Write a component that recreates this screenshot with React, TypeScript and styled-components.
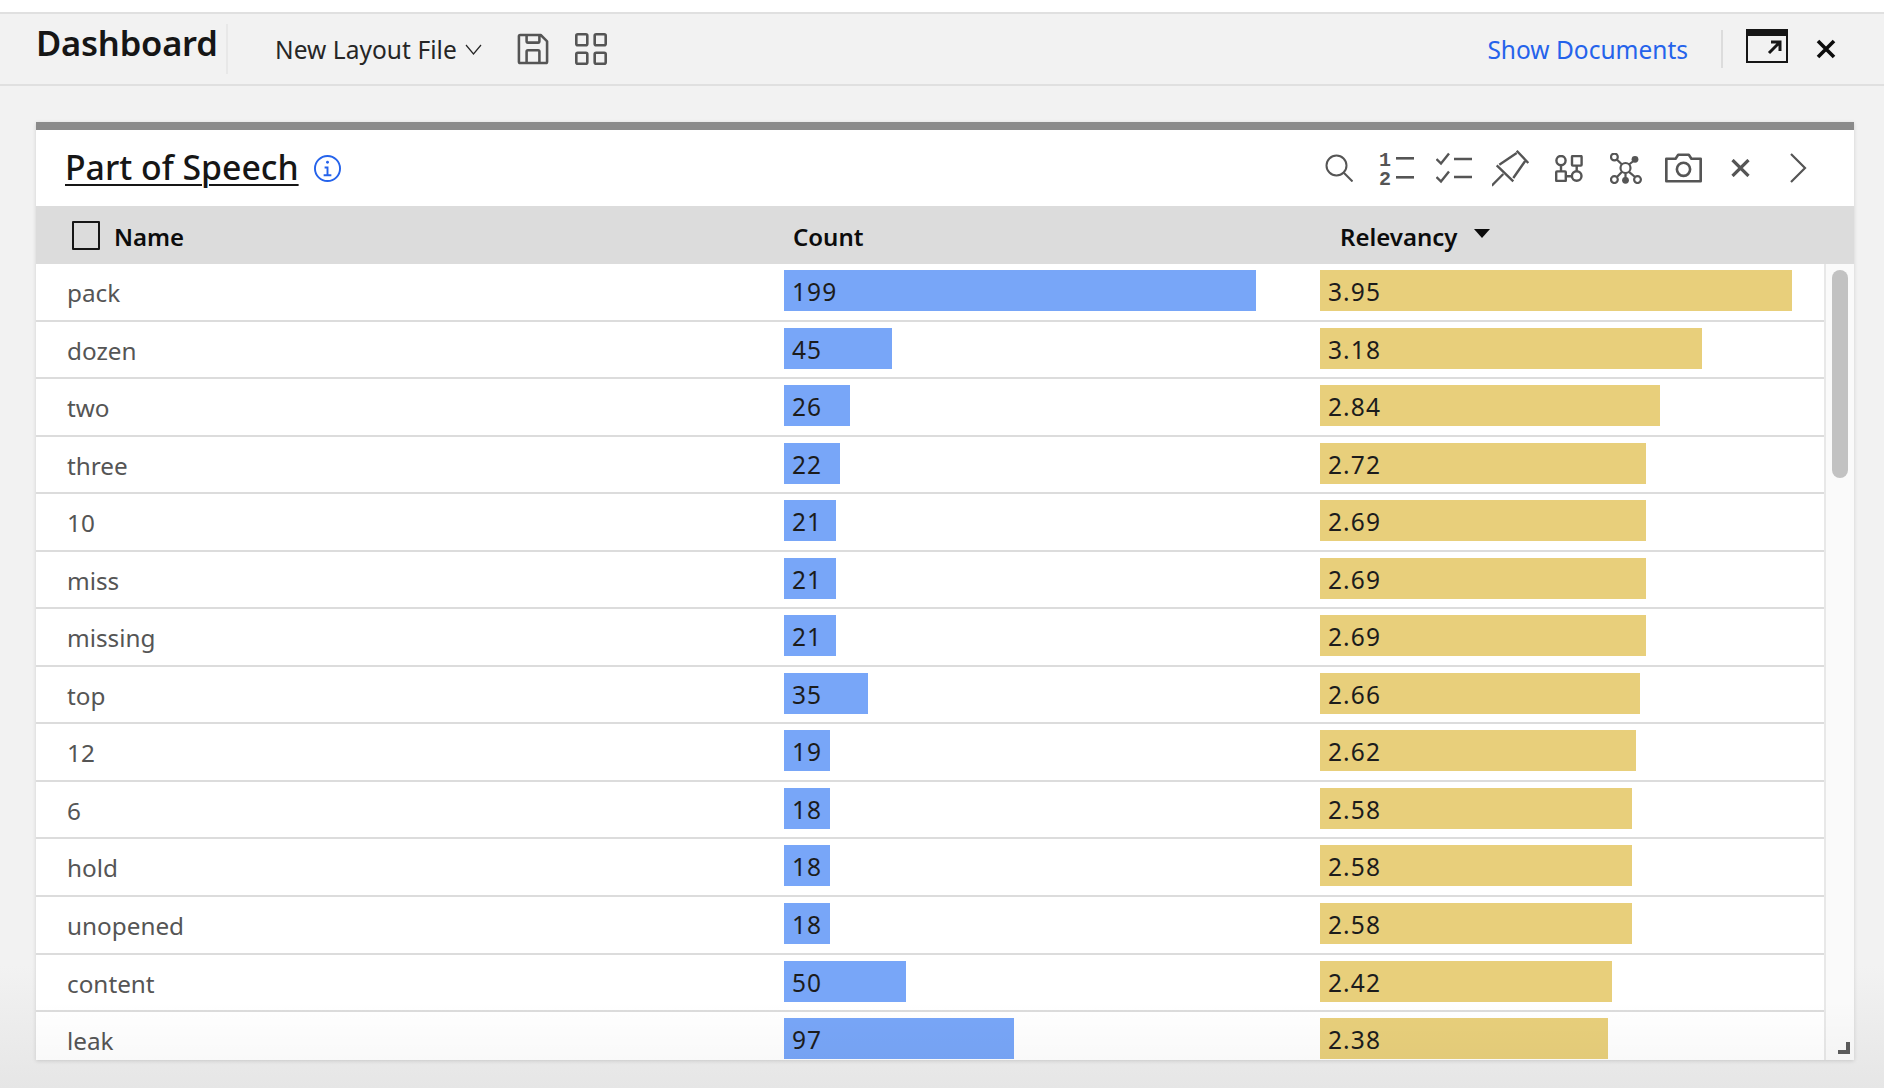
import styled, { createGlobalStyle } from "styled-components";

const GlobalStyle = createGlobalStyle`
  html, body {
    margin: 0;
    background: #fff;
    font-family: "Noto Sans", "Liberation Sans", sans-serif;
  }
`;

/* --- Styles --- */
const Page = styled.div`
  width: 1884px;
  height: 1088px;
  overflow: hidden;
  display: flex;
  flex-direction: column;
  padding-top: 12px;
  box-sizing: border-box;
`;
const TopBar = styled.header`
  height: 74px;
  flex: none;
  box-sizing: border-box;
  display: flex;
  align-items: center;
  background: #f2f2f2;
  border-top: 2px solid #e0e0e0;
  border-bottom: 2px solid #e0e0e0;
`;
const AppTitle = styled.h1`
  margin: 0 0 0 36px;
  width: 190px;
  height: 50px;
  line-height: 38px;
  font-size: 34.5px;
  font-weight: 600;
  letter-spacing: -0.2px;
  color: #161616;
  border-right: 2px solid #e8e8e8;
  white-space: nowrap;
`;
const LayoutPicker = styled.div`
  margin-left: 47px;
  display: flex;
  align-items: center;
  font-size: 24.5px;
  letter-spacing: 0.05px;
  color: #262626;
  white-space: nowrap;
`;
const Chevron = styled.svg`
  margin-left: 8px;
  width: 17px;
  height: 11px;
`;
const HeaderIcons = styled.div`
  margin-left: 35px;
  display: flex;
  gap: 26px;
  align-items: center;
`;
const Spacer = styled.div`
  flex: 1;
`;
const DocsLink = styled.a`
  font-size: 24.5px;
  color: #2563eb;
  white-space: nowrap;
`;
const Divider = styled.div`
  width: 2px;
  height: 38px;
  margin: 0 23px 0 33px;
  background: #dcdcdc;
`;
const PopoutWrap = styled.div`
  display: flex;
  margin-bottom: 6px;
`;
const CloseApp = styled.svg`
  width: 20px;
  height: 20px;
  margin: 0 48px 0 28px;
`;
const Main = styled.main`
  flex: 1;
  min-height: 0;
  padding: 36px 30px 0 36px;
  background: linear-gradient(#f2f2f2 0, #f2f2f2 880px, #e6e6e6 100%);
`;
const Card = styled.section`
  position: relative;
  height: 938px;
  box-sizing: border-box;
  border-top: 8px solid #8a8a8a;
  background: #fff;
  box-shadow: 0 1px 4px rgba(0, 0, 0, 0.14);
  overflow: hidden;
  display: flex;
  flex-direction: column;
`;
const CardHeader = styled.div`
  height: 76px;
  flex: none;
  display: flex;
  align-items: center;
  padding: 0 27px 0 29px;
`;
const CardTitle = styled.h2`
  margin: 0 0 3px;
  font-size: 33.8px;
  font-weight: 500;
  color: #161616;
  text-decoration: underline;
  text-decoration-thickness: 2px;
  text-underline-offset: 4px;
  white-space: nowrap;
`;
const InfoIcon = styled.svg`
  margin-left: 15px;
  width: 27px;
  height: 27px;
`;
const Tools = styled.div`
  margin-left: auto;
  display: flex;
`;
const Tool = styled.div`
  width: 57.4px;
  height: 40px;
  display: flex;
  align-items: center;
  justify-content: center;
`;
const TableHead = styled.div`
  height: 58px;
  flex: none;
  display: grid;
  grid-template-columns: 748px 536px 1fr;
  align-items: center;
  background: #dcdcdc;
`;
const HeadCell = styled.div<{ $inset: number }>`
  display: flex;
  align-items: center;
  padding: 2px 0 0 ${(p) => p.$inset}px;
  font-size: 24px;
  font-weight: 600;
  color: #0c0c0c;
`;
const CheckBox = styled.span`
  width: 28px;
  height: 29px;
  box-sizing: border-box;
  margin: -2px 14px 0 1px;
  border: 2px solid #161616;
  border-radius: 1px;
`;
const SortCaret = styled.span`
  margin: -5px 0 0 16px;
  border-left: 8.5px solid transparent;
  border-right: 8.5px solid transparent;
  border-top: 9px solid #0c0c0c;
`;
const TableBody = styled.div`
  flex: 1;
  min-height: 0;
  display: flex;
`;
const Rows = styled.div`
  flex: 1;
  min-width: 0;
`;
const Row = styled.div`
  height: 57.55px;
  box-sizing: border-box;
  display: grid;
  grid-template-columns: 748px 536px 1fr;
  border-bottom: 2px solid #dcdcdc;
`;
const NameCell = styled.div`
  padding-left: 31px;
  line-height: 58px;
  font-size: 24.3px;
  color: #555;
`;
const BarCell = styled.div`
  padding-top: 6px;
`;
const Bar = styled.div<{ $tone: "count" | "relevancy" }>`
  height: 41px;
  box-sizing: border-box;
  padding-left: 8px;
  line-height: 44px;
  font-size: 24.5px;
  letter-spacing: 1.1px;
  color: #1c1c1c;
  background: ${(p) => (p.$tone === "count" ? "#78a6f8" : "#e8cf7b")};
`;
const ScrollTrack = styled.div`
  position: relative;
  width: 30px;
  flex: none;
  box-sizing: border-box;
  border-left: 2px solid #e8e8e8;
  background: #fafafa;
`;
const ScrollThumb = styled.div`
  width: 16px;
  height: 208px;
  margin: 6px 0 0 6px;
  border-radius: 8px;
  background: #c2c2c2;
`;
const Resizer = styled.svg`
  position: absolute;
  right: 4px;
  bottom: 6px;
  width: 12px;
  height: 12px;
`;
const BottomFade = styled.div`
  position: absolute;
  left: 0;
  right: 0;
  bottom: 0;
  height: 60px;
  background: linear-gradient(rgba(0, 0, 0, 0), rgba(0, 0, 0, 0.022));
  pointer-events: none;
`;

interface IRow {
  name: string;
  count: number;
  countWidth: number;
  relevancy: string;
  relevancyWidth: number;
}

const rows: IRow[] = [
  { name: "pack", count: 199, countWidth: 472, relevancy: "3.95", relevancyWidth: 472 },
  { name: "dozen", count: 45, countWidth: 108, relevancy: "3.18", relevancyWidth: 382 },
  { name: "two", count: 26, countWidth: 66, relevancy: "2.84", relevancyWidth: 340 },
  { name: "three", count: 22, countWidth: 56, relevancy: "2.72", relevancyWidth: 326 },
  { name: "10", count: 21, countWidth: 52, relevancy: "2.69", relevancyWidth: 326 },
  { name: "miss", count: 21, countWidth: 52, relevancy: "2.69", relevancyWidth: 326 },
  { name: "missing", count: 21, countWidth: 52, relevancy: "2.69", relevancyWidth: 326 },
  { name: "top", count: 35, countWidth: 84, relevancy: "2.66", relevancyWidth: 320 },
  { name: "12", count: 19, countWidth: 46, relevancy: "2.62", relevancyWidth: 316 },
  { name: "6", count: 18, countWidth: 46, relevancy: "2.58", relevancyWidth: 312 },
  { name: "hold", count: 18, countWidth: 46, relevancy: "2.58", relevancyWidth: 312 },
  { name: "unopened", count: 18, countWidth: 46, relevancy: "2.58", relevancyWidth: 312 },
  { name: "content", count: 50, countWidth: 122, relevancy: "2.42", relevancyWidth: 292 },
  { name: "leak", count: 97, countWidth: 230, relevancy: "2.38", relevancyWidth: 288 },
];

const GRAY = "#555";

const SaveIcon = () => (
  <svg width="32" height="32" viewBox="3.5 3.5 25 25" fill={GRAY}>
    <path d="M27.71,9.29l-5-5A1,1,0,0,0,22,4H6A2,2,0,0,0,4,6V26a2,2,0,0,0,2,2H26a2,2,0,0,0,2-2V10A1,1,0,0,0,27.71,9.29ZM12,6h8v4H12Zm8,20H12V18h8Zm2,0V18a2,2,0,0,0-2-2H12a2,2,0,0,0-2,2v8H6V6h4v4a2,2,0,0,0,2,2h8a2,2,0,0,0,2-2V6.41l4,4V26Z" />
  </svg>
);

const GridIcon = () => (
  <svg width="32" height="32" viewBox="0 0 32 32" fill="none" stroke={GRAY} strokeWidth="2.6">
    <rect x="1.3" y="1.3" width="11" height="11" rx="1.5" />
    <rect x="19.7" y="1.3" width="11" height="11" rx="1.5" />
    <rect x="1.3" y="19.7" width="11" height="11" rx="1.5" />
    <rect x="19.7" y="19.7" width="11" height="11" rx="1.5" />
  </svg>
);

const PopoutIcon = () => (
  <svg width="42" height="34" viewBox="0 0 42 34" fill="none" stroke="#161616">
    <rect x="1" y="1" width="40" height="32" strokeWidth="2" />
    <rect x="0" y="0" width="42" height="7" fill="#161616" stroke="none" />
    <path d="M23 24 L33 14 M25 13 H34 V22" strokeWidth="3" />
  </svg>
);

const SearchIcon = () => (
  <svg width="28" height="28" viewBox="0 0 28 28" fill="none" stroke={GRAY} strokeWidth="2">
    <circle cx="11.5" cy="11.5" r="10" />
    <path d="M18.8 18.8 L27.5 27.5" />
  </svg>
);

const NumberedListIcon = () => (
  <svg width="35" height="46" viewBox="0 -6 35 46" fill={GRAY} stroke="none">
    <text x="0" y="14.5" fontFamily="Liberation Mono" fontWeight="700" fontSize="20">1</text>
    <text x="0" y="34" fontFamily="Liberation Mono" fontWeight="700" fontSize="20">2</text>
    <rect x="17" y="6" width="18" height="2.6" />
    <rect x="17" y="25" width="18" height="2.6" />
  </svg>
);

const CheckListIcon = () => (
  <svg width="36" height="32" viewBox="0 0 36 32" fill="none" stroke={GRAY} strokeWidth="2.4">
    <path d="M0.5 7 L5 11.5 L13 1.5" />
    <path d="M0.5 25 L5 29.5 L13 19.5" />
    <path d="M18 7 H36 M18 25 H36" />
  </svg>
);

const PinIcon = () => (
  <svg width="38" height="38" viewBox="1 0 38 38" fill="none" stroke={GRAY} strokeWidth="2.4">
    <path d="M25.7 1.7 L37.3 14 M5.7 16.3 L22.3 32.3 M0.7 36.7 L12.3 25 M8.3 15.7 L25.7 4 M22.3 29 L34 12.3" />
  </svg>
);

const FlowIcon = () => (
  <svg width="28" height="27" viewBox="0 0 28 27" fill="none" stroke={GRAY} strokeWidth="2.4">
    <circle cx="6" cy="5.6" r="4.6" />
    <rect x="17" y="1" width="9.6" height="9.6" rx="0.8" />
    <rect x="1.2" y="16.4" width="9.6" height="9.6" rx="0.8" />
    <circle cx="21.7" cy="21" r="4.8" />
    <path d="M6 10.2 V16.4 M21.7 10.6 V16.2 M10.8 21.2 H16.9" />
  </svg>
);

const NetworkIcon = () => (
  <svg width="32" height="31" viewBox="0 0 32 31" fill="none" stroke={GRAY} strokeWidth="2.2">
    <circle cx="15.5" cy="15" r="5" />
    <circle cx="4.4" cy="4" r="3.4" />
    <circle cx="4.4" cy="26.6" r="3.4" />
    <circle cx="27.5" cy="26.6" r="3.4" />
    <circle cx="25" cy="6.3" r="3.4" fill={GRAY} stroke="none" />
    <circle cx="15.5" cy="27.3" r="3.4" fill={GRAY} stroke="none" />
    <path d="M6.8 6.5 L12 11.5 M23.5 8 L19 11.5 M15.5 20 V25 M7 24 L12 18.8 M25 24 L19 18.8" />
  </svg>
);

const CameraIcon = () => (
  <svg width="37" height="30" viewBox="2 4 28 22" fill={GRAY}>
    <path d="M29,26H3a1,1,0,0,1-1-1V8A1,1,0,0,1,3,7H9.46l1.71-2.55A1,1,0,0,1,12,4h8a1,1,0,0,1,.83.45L22.54,7H29a1,1,0,0,1,1,1V25A1,1,0,0,1,29,26ZM4,24H28V9H22a1,1,0,0,1-.83-.45L19.46,6H12.54L10.83,8.55A1,1,0,0,1,10,9H4Z" />
    <path d="M16,22a6,6,0,1,1,6-6A6,6,0,0,1,16,22Zm0-10a4,4,0,1,0,4,4A4,4,0,0,0,16,12Z" />
  </svg>
);

const CrossIcon = () => (
  <svg width="19" height="18" viewBox="0 0 19 18" fill="none" stroke={GRAY} strokeWidth="3.2">
    <path d="M1.5 1 L17.5 17 M17.5 1 L1.5 17" />
  </svg>
);

const NextIcon = () => (
  <svg width="17" height="30" viewBox="0 0 17 30" fill="none" stroke={GRAY} strokeWidth="2.2">
    <path d="M1 1 L15 15 L1 29" />
  </svg>
);

const tools = [
  <SearchIcon key="search" />,
  <NumberedListIcon key="numbered" />,
  <CheckListIcon key="check" />,
  <PinIcon key="pin" />,
  <FlowIcon key="flow" />,
  <NetworkIcon key="network" />,
  <CameraIcon key="camera" />,
  <CrossIcon key="cross" />,
  <NextIcon key="next" />,
];

export default function App() {
  return (
    <Page>
      <GlobalStyle />
      <TopBar>
        <AppTitle>Dashboard</AppTitle>
        <LayoutPicker>
          New Layout File
          <Chevron viewBox="0 0 17 11" fill="none" stroke="#262626" strokeWidth="1.2">
            <path d="M1 1 L8.5 10 L16 1" />
          </Chevron>
        </LayoutPicker>
        <HeaderIcons>
          <SaveIcon />
          <GridIcon />
        </HeaderIcons>
        <Spacer />
        <DocsLink>Show Documents</DocsLink>
        <Divider />
        <PopoutWrap>
          <PopoutIcon />
        </PopoutWrap>
        <CloseApp viewBox="0 0 20 20" fill="none" stroke="#0c0c0c" strokeWidth="3.6">
          <path d="M2 2 L18 18 M18 2 L2 18" />
        </CloseApp>
      </TopBar>
      <Main>
        <Card>
          <CardHeader>
            <CardTitle>Part of Speech</CardTitle>
            <InfoIcon viewBox="2 2 28 28" fill="#2563eb">
              <path d="M17 22v-8h-4v2h2v6h-3v2h8v-2h-3z" />
              <path d="M16 8a1.5 1.5 0 1 0 1.5 1.5A1.5 1.5 0 0 0 16 8z" />
              <path d="M16 30a14 14 0 1 1 14-14 14 14 0 0 1-14 14zm0-26a12 12 0 1 0 12 12A12 12 0 0 0 16 4z" />
            </InfoIcon>
            <Tools>
              {tools.map((icon) => (
                <Tool key={icon.key}>{icon}</Tool>
              ))}
            </Tools>
          </CardHeader>
          <TableHead>
            <HeadCell $inset={35}>
              <CheckBox />
              Name
            </HeadCell>
            <HeadCell $inset={9}>Count</HeadCell>
            <HeadCell $inset={20}>
              Relevancy
              <SortCaret />
            </HeadCell>
          </TableHead>
          <TableBody>
            <Rows>
              {rows.map((row) => (
                <Row key={row.name}>
                  <NameCell>{row.name}</NameCell>
                  <BarCell>
                    <Bar $tone="count" style={{ width: row.countWidth }}>
                      {row.count}
                    </Bar>
                  </BarCell>
                  <BarCell>
                    <Bar $tone="relevancy" style={{ width: row.relevancyWidth }}>
                      {row.relevancy}
                    </Bar>
                  </BarCell>
                </Row>
              ))}
            </Rows>
            <ScrollTrack>
              <ScrollThumb />
              <Resizer viewBox="0 0 12 12" fill="#5c5c5c">
                <path d="M8 0 H12 V12 H0 V8 H8 Z" />
              </Resizer>
            </ScrollTrack>
          </TableBody>
          <BottomFade />
        </Card>
      </Main>
    </Page>
  );
}
